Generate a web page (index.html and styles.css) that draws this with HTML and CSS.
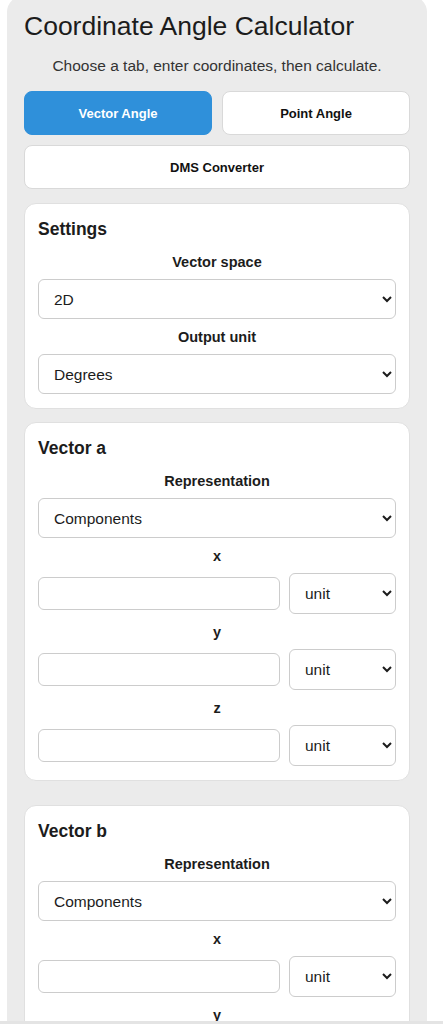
FILE: index.html
```html
<!DOCTYPE html>
<html lang="en">
<head>
<meta charset="utf-8">
<title>Coordinate Angle Calculator</title>
<link rel="stylesheet" href="styles.css">
</head>
<body>
<main class="app">
  <h1 class="title">Coordinate Angle Calculator</h1>
  <p class="subtitle">Choose a tab, enter coordinates, then calculate.</p>

  <nav class="tabs">
    <button class="tab tab-active">Vector Angle</button>
    <button class="tab">Point Angle</button>
    <button class="tab tab-wide">DMS Converter</button>
  </nav>

  <section class="card">
    <h2 class="card-title">Settings</h2>
    <div class="field">
      <label class="label">Vector space</label>
      <select class="select"><option>2D</option><option>3D</option></select>
    </div>
    <div class="field">
      <label class="label">Output unit</label>
      <select class="select"><option>Degrees</option><option>Radians</option></select>
    </div>
  </section>

  <section class="card">
    <h2 class="card-title">Vector a</h2>
    <div class="field">
      <label class="label">Representation</label>
      <select class="select"><option>Components</option><option>Magnitude &amp; direction</option></select>
    </div>
    <div class="field">
      <label class="label">x</label>
      <div class="row">
        <input class="input" type="text">
        <select class="select unit"><option>unit</option></select>
      </div>
    </div>
    <div class="field">
      <label class="label">y</label>
      <div class="row">
        <input class="input" type="text">
        <select class="select unit"><option>unit</option></select>
      </div>
    </div>
    <div class="field">
      <label class="label">z</label>
      <div class="row">
        <input class="input" type="text">
        <select class="select unit"><option>unit</option></select>
      </div>
    </div>
  </section>

  <section class="card card-spaced">
    <h2 class="card-title">Vector b</h2>
    <div class="field">
      <label class="label">Representation</label>
      <select class="select"><option>Components</option><option>Magnitude &amp; direction</option></select>
    </div>
    <div class="field">
      <label class="label">x</label>
      <div class="row">
        <input class="input" type="text">
        <select class="select unit"><option>unit</option></select>
      </div>
    </div>
    <div class="field">
      <label class="label">y</label>
      <div class="row">
        <input class="input" type="text">
        <select class="select unit"><option>unit</option></select>
      </div>
    </div>
    <div class="field">
      <label class="label">z</label>
      <div class="row">
        <input class="input" type="text">
        <select class="select unit"><option>unit</option></select>
      </div>
    </div>
  </section>
</main>
<div class="bottom-bar"></div>
</body>
</html>
```

FILE: styles.css
```css
html, body {
  margin: 0;
  padding: 0;
  background: #ffffff;
}

body {
  font-family: "Liberation Sans", Arial, sans-serif;
  color: #1e1e1e;
  padding: 0 16px 0 7px;
}

.app {
  width: 420px;
  box-sizing: border-box;
  margin-top: -4px;
  padding: 15px 17px 40px;
  background: #ebebeb;
  border-radius: 16px 16px 0 0;
}

.title {
  margin: 0;
  font-size: 26.5px;
  font-weight: normal;
  line-height: 30px;
  color: #1c1c1c;
}

.subtitle {
  margin: 16px 0 0;
  text-align: center;
  font-size: 15.5px;
  line-height: 18px;
  color: #333333;
}

.tabs {
  display: grid;
  grid-template-columns: 1fr 1fr;
  gap: 10px;
  margin-top: 16px;
}

.tab {
  height: 44px;
  border: 1px solid #d9d9d9;
  border-radius: 8px;
  background: #ffffff;
  font-family: "Liberation Sans", Arial, sans-serif;
  font-size: 13px;
  font-weight: bold;
  color: #111111;
  padding: 0;
}

.tab-active {
  background: #2f90da;
  border-color: #2f90da;
  color: #ffffff;
}

.tab-wide {
  grid-column: 1 / span 2;
}

.card {
  margin-top: 14px;
  background: #ffffff;
  border: 1px solid #e0e0e0;
  border-radius: 12px;
  padding: 15px 13px 14px;
  display: flex;
  flex-direction: column;
  gap: 10px;
}

.card + .card {
  margin-top: 13px;
}

.card + .card-spaced {
  margin-top: 24px;
}

.card-title {
  margin: 0 0 5px;
  font-size: 17.5px;
  line-height: 20px;
  font-weight: bold;
  color: #1c1c1c;
}

.field {
  display: flex;
  flex-direction: column;
  gap: 8px;
}

.label {
  text-align: center;
  font-size: 14.5px;
  line-height: 17px;
  font-weight: bold;
  color: #1c1c1c;
}

.select {
  height: 40px;
  width: 100%;
  box-sizing: border-box;
  border: 1px solid #cccccc;
  border-radius: 6px;
  background-color: #ffffff;
  font-family: "Liberation Sans", Arial, sans-serif;
  font-size: 15.5px;
  color: #1c1c1c;
  padding: 0 6px 0 11px;
}

.row {
  display: flex;
  align-items: center;
  gap: 9px;
}

.input {
  flex: 1;
  min-width: 0;
  height: 33px;
  box-sizing: border-box;
  border: 1px solid #cccccc;
  border-radius: 6px;
  background: #ffffff;
  font-family: "Liberation Sans", Arial, sans-serif;
  font-size: 15px;
  padding: 0 10px;
}

.unit {
  width: 107px;
  flex: none;
  height: 41px;
}

.bottom-bar {
  position: fixed;
  left: 0;
  right: 0;
  bottom: 0;
  height: 3px;
  background: #e4e4e4;
}
```
